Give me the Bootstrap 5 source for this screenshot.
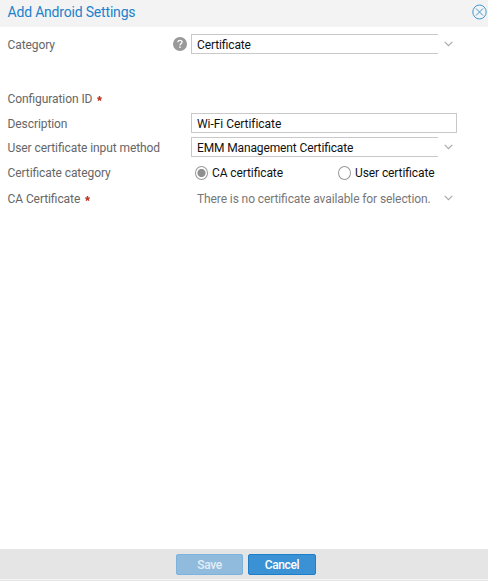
<!DOCTYPE html>
<html lang="en">
<head>
<meta charset="utf-8">
<title>Add Android Settings</title>
<link href="https://cdn.jsdelivr.net/npm/bootstrap@5.3.0/dist/css/bootstrap.min.css" rel="stylesheet">
<style>
body{font-family:Roboto,sans-serif;font-size:12px;line-height:20px;color:#666;letter-spacing:-.08px;font-feature-settings:"liga" 1}
.title-bar{height:27px;background:#f3f3f3;padding:0 1px 3px 7.5px}
.title-bar h1{font-size:14px;line-height:24px;color:#1b82cc;font-weight:400;letter-spacing:-.19px}
.close-btn{width:15px;height:16px}
.setting{height:20px;padding-left:7.5px}
.setting-name{width:183.5px;padding-top:1px;padding-right:4px}
.setting .form-control,.pick{height:20px;min-height:0;padding:1px 5px 0;border:1px solid #c9c9c9;border-radius:0;font-size:12px;line-height:18px;color:#111;letter-spacing:-.04px}
.setting .form-control{width:266px}
.setting .pick{width:247px;border-right:0;letter-spacing:-.13px}
.setting .pick.is-empty{border-color:transparent;color:#777;letter-spacing:-.1px}
.chevron{width:9px;height:6px;margin-left:6px}
.help-icon{width:14px;height:14px;margin-top:-2px}
.req{width:5px;height:5px;margin-left:5px;margin-top:0}
.choice{color:#111;height:20px;padding-top:1px;letter-spacing:-.1px}
.choice input{appearance:none;width:13px;height:14px;border:1px solid #999;border-radius:50%;margin:0 4px 0 0;background:#fff}
.choice input:checked{background:radial-gradient(circle,#8f8f8f 0 3.7px,#fff 4.4px)}
.first-choice{width:147px;padding-left:4px}
.footer-bar{height:32px;background:#e5e5e5;padding-top:5px;gap:5px;border-bottom:1px solid #e5e5e5;box-shadow:inset 0 -1px #f5f5f5;padding-left:4px}
.footer-bar .btn{height:21px;padding:1px 0 0;font-size:12px;line-height:19px;font-weight:500;border-radius:2px;color:#fff;letter-spacing:-.35px}
.footer-bar .btn-save{width:67px;background:#91bbdc;border-color:#7cb2dc;color:#e3edf5;opacity:1}
.btn-cancel{width:68px;background:#3a92d5;border-color:#1d7fca}
.row-top{margin-top:7px}.row-gap{margin-top:34px}.row-4{margin-top:4px}.row-5{margin-top:5px}.row-6{margin-top:6px}
</style>
<script src="https://cdn.jsdelivr.net/npm/bootstrap@5.3.0/dist/js/bootstrap.bundle.min.js"></script>
</head>
<body>
<svg class="d-none"><defs>
<symbol id="chev" viewBox="0 0 9 6"><path d="M.7.8 4.5 4.7 8.3.8" fill="none" stroke="#aaa" stroke-width="1.2"/></symbol>
<symbol id="star" viewBox="0 0 5 5"><path d="M2.5 0v2.5L.2 1.9M2.5 2.5l2.3-.6M2.5 2.5 1.1 4.6M2.5 2.5l1.4 2.1" stroke="#c0392b" stroke-width="1.4" fill="none"/></symbol>
</defs></svg>
<div class="d-flex flex-column vh-100 bg-white">
<header class="title-bar d-flex align-items-center justify-content-between">
<h1 class="m-0">Add Android Settings</h1>
<svg class="close-btn" viewBox="0 0 15 16"><ellipse cx="7.5" cy="8" rx="6.7" ry="7" fill="none" stroke="#4496d3"/><path d="m4 4.5 7 7m0-7-7 7" stroke="#4496d3" fill="none"/></svg>
</header>
<main class="flex-grow-1">
<div class="setting row-top d-flex">
<div class="setting-name d-flex justify-content-between align-items-center"><span>Category</span>
<svg class="help-icon" viewBox="0 0 14 14"><circle cx="7" cy="7" r="7" fill="#999"/><path d="M4.9 5.3c0-2.6 4.2-2.5 4.2-.2C9.1 6.6 7 6.6 7 8.5M7 9.6v1.4" fill="none" stroke="#fff" stroke-width="1.3"/></svg></div>
<div class="d-flex align-items-center"><div class="pick">Certificate</div><svg class="chevron"><use href="#chev"/></svg></div>
</div>
<div class="setting row-gap d-flex"><div class="setting-name d-flex align-items-center">Configuration ID<svg class="req"><use href="#star"/></svg></div></div>
<div class="setting row-5 d-flex"><label class="setting-name" for="desc">Description</label><input id="desc" class="form-control" value="Wi-Fi Certificate"></div>
<div class="setting row-4 d-flex"><div class="setting-name text-nowrap">User certificate input method</div>
<div class="d-flex align-items-center"><div class="pick">EMM Management Certificate</div><svg class="chevron"><use href="#chev"/></svg></div></div>
<div class="setting row-5 d-flex"><div class="setting-name">Certificate category</div>
<label class="choice first-choice d-flex align-items-center"><input type="radio" name="cat" checked>CA certificate</label>
<label class="choice d-flex align-items-center"><input type="radio" name="cat">User certificate</label></div>
<div class="setting row-6 d-flex"><div class="setting-name d-flex align-items-center">CA Certificate<svg class="req"><use href="#star"/></svg></div>
<div class="d-flex align-items-center"><div class="pick is-empty text-nowrap">There is no certificate available for selection.</div><svg class="chevron"><use href="#chev"/></svg></div></div>
</main>
<footer class="footer-bar d-flex justify-content-center"><button class="btn btn-save" disabled>Save</button><button class="btn btn-cancel">Cancel</button></footer>
</div>
</body>
</html>
